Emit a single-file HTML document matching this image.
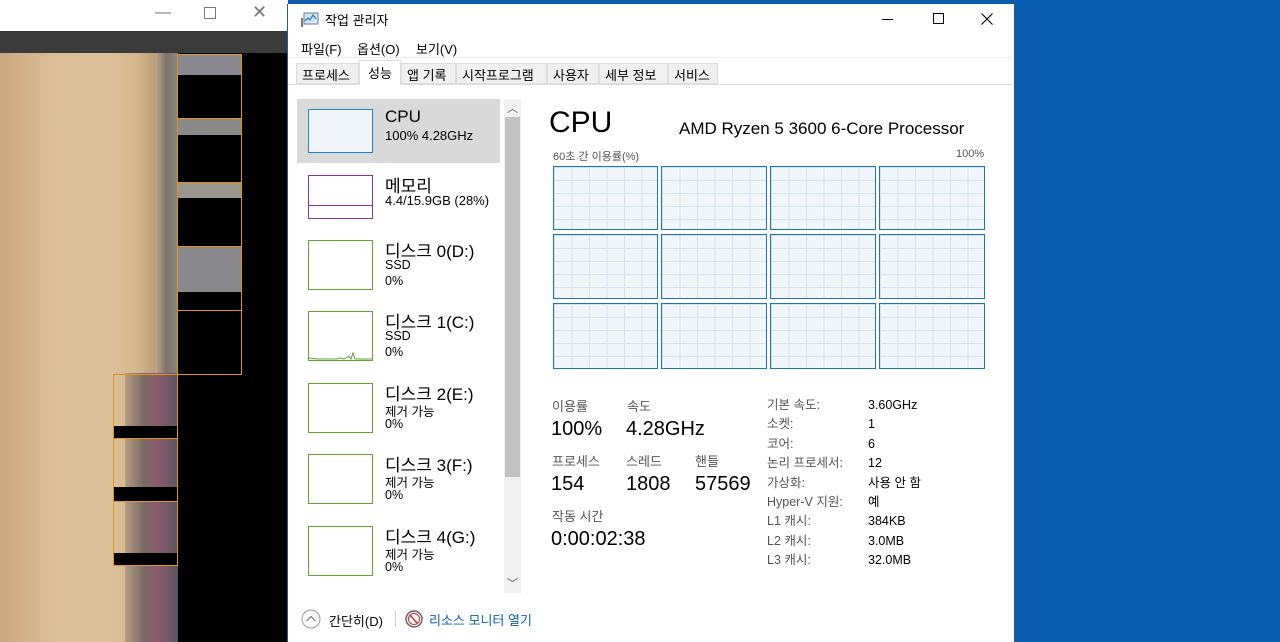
<!DOCTYPE html>
<html><head><meta charset="utf-8"><style>
*{margin:0;padding:0;box-sizing:border-box}
body{width:1280px;height:642px;overflow:hidden;position:relative;background:#0a5cae;font-family:"Liberation Sans","Noto Sans CJK KR",sans-serif;color:#000}
.a{position:absolute}
.t{position:absolute;white-space:nowrap}
.cell{position:absolute;border:1px solid #1a76b0;background-color:#f1f6fb;background-image:linear-gradient(to right,#d5e2ee 1px,transparent 1px),linear-gradient(to bottom,#d5e2ee 1px,transparent 1px);background-size:17.5px 100%,100% 13px}
.th{position:absolute;width:65px;height:50px;background:#fff}
.sm{font-size:12.5px;color:#555}
</style></head><body>
<!-- left window -->
<div class="a" style="left:0;top:0;width:288px;height:31px;background:#fff"></div>
<div class="t" style="left:155px;top:4px;font-size:16px;color:#777">—</div>
<div class="a" style="left:204px;top:7px;width:12px;height:12px;border:1px solid #777"></div>
<div class="t" style="left:252px;top:2px;font-size:18px;color:#777">✕</div>
<div class="a" style="left:0;top:31px;width:288px;height:22px;background:#3b3b3b"></div>
<div class="a" style="left:0;top:53px;width:288px;height:589px;background:#000"></div>
<div class="a" style="left:0;top:53px;width:178px;height:589px;background:linear-gradient(90deg,#c9a77f 0%,#d9bf98 30%,#dcc39d 60%,#d2b68c 78%,#b59c7a 88%,#8a7860 95%,#706660 100%)"></div>
<div class="a" style="left:155px;top:53px;width:23px;height:320px;background:linear-gradient(90deg,#bfa78a,#7c7268 50%,#8c8684)"></div>
<div class="a" style="left:125px;top:373px;width:53px;height:269px;background:linear-gradient(90deg,#b59c80,#7a6a66 35%,#8a5e6e 60%,#5a5560)"></div>
<!-- right column boxes -->
<div class="a" style="left:177px;top:54px;width:65px;height:321px;background:#000;border:1px solid #e0951e"></div>
<div class="a" style="left:178px;top:55px;width:63px;height:20px;background:#8a8890"></div>
<div class="a" style="left:178px;top:118px;width:63px;height:17px;background:#8a8a88"></div>
<div class="a" style="left:178px;top:182px;width:63px;height:16px;background:#9a968e"></div>
<div class="a" style="left:178px;top:246px;width:63px;height:46px;background:#88878a"></div>
<div class="a" style="left:177px;top:118px;width:65px;height:1px;background:#e0951e"></div>
<div class="a" style="left:177px;top:182px;width:65px;height:1px;background:#e0951e"></div>
<div class="a" style="left:177px;top:246px;width:65px;height:1px;background:#e0951e"></div>
<div class="a" style="left:177px;top:310px;width:65px;height:1px;background:#e0951e"></div>
<!-- lower boxes -->
<div class="a" style="left:113px;top:374px;width:65px;height:192px;border:1px solid #e0951e"></div>
<div class="a" style="left:114px;top:426px;width:63px;height:12px;background:#000"></div>
<div class="a" style="left:113px;top:438px;width:65px;height:1px;background:#e0951e"></div>
<div class="a" style="left:114px;top:487px;width:63px;height:14px;background:#000"></div>
<div class="a" style="left:113px;top:501px;width:65px;height:1px;background:#e0951e"></div>
<div class="a" style="left:114px;top:553px;width:63px;height:12px;background:#000"></div>

<!-- task manager -->
<div class="a" style="left:287px;top:4px;width:727px;height:638px;background:#fff;border-left:1px solid #1a5fa8"></div>
<svg class="a" style="left:301px;top:12px" width="18" height="16"><rect x="3" y="1" width="14" height="11" fill="#d7e9f6" stroke="#5f7f99"/><polyline points="4,9 7,6 9,8 12,3 15,7" fill="none" stroke="#2b7fc4" stroke-width="1.3"/><rect x="0" y="6" width="2" height="9" fill="#777"/></svg>
<div class="t" style="left:325px;top:10px;font-size:13px">작업 관리자</div>
<div class="a" style="left:882px;top:19px;width:11px;height:1px;background:#000"></div>
<div class="a" style="left:933px;top:13px;width:11px;height:11px;border:1px solid #000"></div>
<svg class="a" style="left:981px;top:13px" width="12" height="12"><path d="M0.5 0.5L11.5 11.5M11.5 0.5L0.5 11.5" stroke="#000" stroke-width="1.1"/></svg>
<div class="t" style="left:301px;top:39px;font-size:13px">파일(F)</div>
<div class="t" style="left:357px;top:39px;font-size:13px">옵션(O)</div>
<div class="t" style="left:416px;top:39px;font-size:13px">보기(V)</div>
<div class="a" style="left:288px;top:57px;width:725px;height:1px;background:#eee"></div>
<!-- tabs -->
<div class="a" style="left:288px;top:84px;width:725px;height:1px;background:#ddd"></div>
<div class="a" style="left:296px;top:63px;width:63px;height:21px;background:#f0f0f0;border:1px solid #ddd"></div>
<div class="t" style="left:302px;top:65px;font-size:13px">프로세스</div>
<div class="a" style="left:359px;top:60px;width:42px;height:25px;background:#fff;border:1px solid #ddd;border-bottom:none"></div>
<div class="t" style="left:368px;top:63px;font-size:13px">성능</div>
<div class="a" style="left:401px;top:63px;width:55px;height:21px;background:#f0f0f0;border:1px solid #ddd"></div>
<div class="t" style="left:407px;top:65px;font-size:13px">앱 기록</div>
<div class="a" style="left:456px;top:63px;width:91px;height:21px;background:#f0f0f0;border:1px solid #ddd"></div>
<div class="t" style="left:462px;top:65px;font-size:13px">시작프로그램</div>
<div class="a" style="left:547px;top:63px;width:52px;height:21px;background:#f0f0f0;border:1px solid #ddd"></div>
<div class="t" style="left:553px;top:65px;font-size:13px">사용자</div>
<div class="a" style="left:599px;top:63px;width:69px;height:21px;background:#f0f0f0;border:1px solid #ddd"></div>
<div class="t" style="left:605px;top:65px;font-size:13px">세부 정보</div>
<div class="a" style="left:668px;top:63px;width:50px;height:21px;background:#f0f0f0;border:1px solid #ddd"></div>
<div class="t" style="left:674px;top:65px;font-size:13px">서비스</div>
<!-- sidebar -->
<div class="a" style="left:297px;top:99px;width:203px;height:64px;background:#d9d9d9"></div>
<div class="a" style="left:504px;top:99px;width:17px;height:494px;background:#f0f0f0"></div>
<div class="a" style="left:505px;top:117px;width:15px;height:360px;background:#c2c2c2"></div>
<div class="t" style="left:507px;top:100px;font-size:11px;color:#555">︿</div>
<div class="t" style="left:507px;top:575px;font-size:11px;color:#555">﹀</div>

<div class="th" style="left:308px;top:109px;height:44px;border:1px solid #1a86c8;background:#f1f6fb"></div>
<div class="t" style="left:385px;top:107px;font-size:17px">CPU</div>
<div class="t" style="left:385px;top:128px;font-size:13px">100% 4.28GHz</div>

<div class="th" style="left:308px;top:175px;height:44px;border:1px solid #8b2fa3"></div>
<div class="a" style="left:309px;top:205px;width:63px;height:1px;background:#8b2fa3"></div>
<div class="t" style="left:385px;top:172px;font-size:17px">메모리</div>
<div class="t" style="left:385px;top:193px;font-size:13px">4.4/15.9GB (28%)</div>

<div class="th" style="left:308px;top:240px;border:1px solid #5ea52b"></div>
<div class="t" style="left:385px;top:237px;font-size:17px">디스크 0(D:)</div>
<div class="t" style="left:385px;top:258px;font-size:12.5px">SSD</div>
<div class="t" style="left:385px;top:274px;font-size:12.5px">0%</div>

<div class="th" style="left:308px;top:311px;border:1px solid #5ea52b"></div>
<svg class="a" style="left:309px;top:349px" width="63" height="11"><polyline points="0,9 8,10 28,10 31,9 35,10 40,7 42,10 44,4 46,10 63,10" fill="none" stroke="#5ea52b"/></svg>
<div class="t" style="left:385px;top:308px;font-size:17px">디스크 1(C:)</div>
<div class="t" style="left:385px;top:329px;font-size:12.5px">SSD</div>
<div class="t" style="left:385px;top:345px;font-size:12.5px">0%</div>

<div class="th" style="left:308px;top:383px;border:1px solid #5ea52b"></div>
<div class="t" style="left:385px;top:380px;font-size:17px">디스크 2(E:)</div>
<div class="t" style="left:385px;top:401px;font-size:12.5px">제거 가능</div>
<div class="t" style="left:385px;top:417px;font-size:12.5px">0%</div>

<div class="th" style="left:308px;top:454px;border:1px solid #5ea52b"></div>
<div class="t" style="left:385px;top:451px;font-size:17px">디스크 3(F:)</div>
<div class="t" style="left:385px;top:472px;font-size:12.5px">제거 가능</div>
<div class="t" style="left:385px;top:488px;font-size:12.5px">0%</div>

<div class="th" style="left:308px;top:526px;border:1px solid #5ea52b"></div>
<div class="t" style="left:385px;top:523px;font-size:17px">디스크 4(G:)</div>
<div class="t" style="left:385px;top:544px;font-size:12.5px">제거 가능</div>
<div class="t" style="left:385px;top:560px;font-size:12.5px">0%</div>

<!-- footer -->
<svg class="a" style="left:301px;top:609px" width="20" height="20"><circle cx="10" cy="10" r="9" fill="#fff" stroke="#999"/><polyline points="5.5,12 10,7.5 14.5,12" fill="none" stroke="#777" stroke-width="1.2"/></svg>
<div class="t" style="left:329px;top:611px;font-size:13px">간단히(D)</div>
<div class="a" style="left:395px;top:611px;width:1px;height:16px;background:#ccc"></div>
<svg class="a" style="left:405px;top:610px" width="18" height="18"><circle cx="9" cy="9" r="8" fill="#eee" stroke="#666" stroke-width="1.5"/><circle cx="9" cy="9" r="5.5" fill="#fff" stroke="#c33"/><line x1="5" y1="5" x2="12" y2="13" stroke="#c33" stroke-width="1.5"/></svg>
<div class="t" style="left:429px;top:610px;font-size:13px;color:#0b5fb0">리소스 모니터 열기</div>

<!-- main panel -->
<div class="t" style="left:549px;top:106px;font-size:30px">CPU</div>
<div class="t" style="left:679px;top:119px;font-size:17px">AMD Ryzen 5 3600 6-Core Processor</div>
<div class="t sm" style="left:553px;top:148px;font-size:11px">60초 간 이용률(%)</div>
<div class="t sm" style="left:956px;top:148px;font-size:11px">100%</div>
<div class="cell" style="left:553px;top:166px;width:105px;height:64px"></div>
<div class="cell" style="left:661px;top:166px;width:106px;height:64px"></div>
<div class="cell" style="left:770px;top:166px;width:106px;height:64px"></div>
<div class="cell" style="left:879px;top:166px;width:106px;height:64px"></div>
<div class="cell" style="left:553px;top:234px;width:105px;height:65px"></div>
<div class="cell" style="left:661px;top:234px;width:106px;height:65px"></div>
<div class="cell" style="left:770px;top:234px;width:106px;height:65px"></div>
<div class="cell" style="left:879px;top:234px;width:106px;height:65px"></div>
<div class="cell" style="left:553px;top:303px;width:105px;height:66px"></div>
<div class="cell" style="left:661px;top:303px;width:106px;height:66px"></div>
<div class="cell" style="left:770px;top:303px;width:106px;height:66px"></div>
<div class="cell" style="left:879px;top:303px;width:106px;height:66px"></div>

<div class="t sm" style="left:552px;top:396px;font-size:13px">이용률</div>
<div class="t sm" style="left:627px;top:396px;font-size:13px">속도</div>
<div class="t" style="left:551px;top:418px;font-size:20px">100%</div>
<div class="t" style="left:626px;top:418px;font-size:20px">4.28GHz</div>
<div class="t sm" style="left:552px;top:451px;font-size:13px">프로세스</div>
<div class="t sm" style="left:626px;top:451px;font-size:13px">스레드</div>
<div class="t sm" style="left:695px;top:451px;font-size:13px">핸들</div>
<div class="t" style="left:551px;top:473px;font-size:20px">154</div>
<div class="t" style="left:626px;top:473px;font-size:20px">1808</div>
<div class="t" style="left:695px;top:473px;font-size:20px">57569</div>
<div class="t sm" style="left:552px;top:506px;font-size:13px">작동 시간</div>
<div class="t" style="left:551px;top:528px;font-size:20px">0:00:02:38</div>

<div class="t sm" style="left:767px;top:396px;font-size:12.5px;line-height:19.4px">기본 속도:<br>소켓:<br>코어:<br>논리 프로세서:<br>가상화:<br>Hyper-V 지원:<br>L1 캐시:<br>L2 캐시:<br>L3 캐시:</div>
<div class="t" style="left:868px;top:396px;font-size:12.5px;line-height:19.4px">3.60GHz<br>1<br>6<br>12<br>사용 안 함<br>예<br>384KB<br>3.0MB<br>32.0MB</div>
</body></html>
